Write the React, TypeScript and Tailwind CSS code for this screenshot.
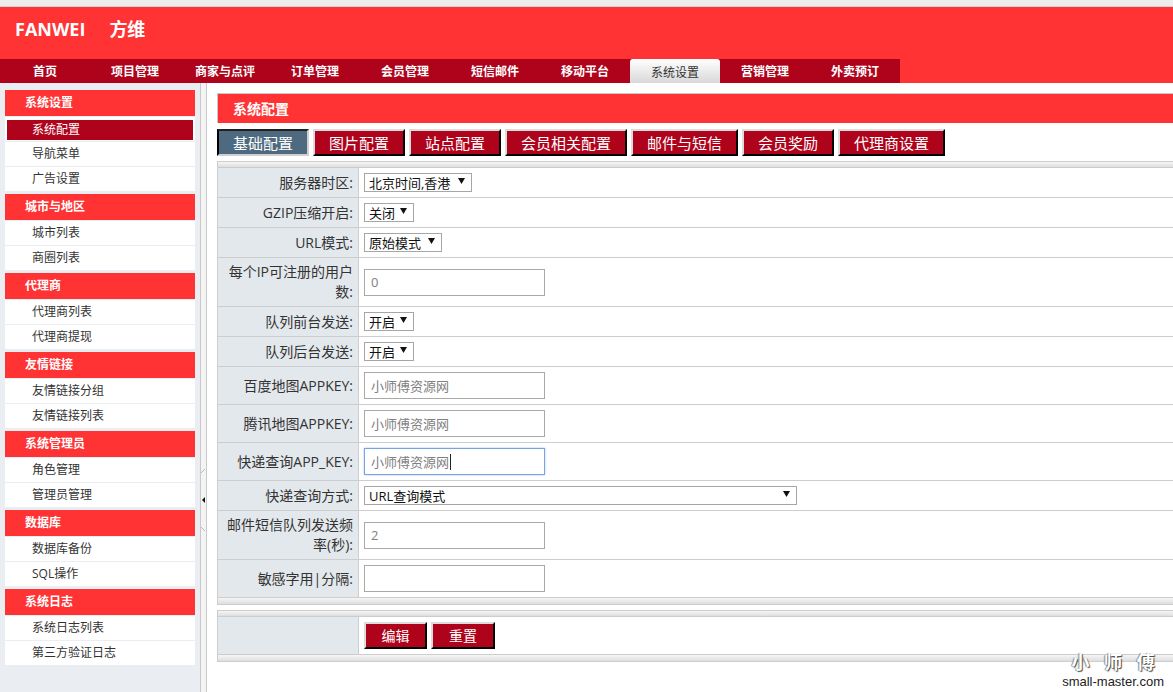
import React from "react";

const navItems = ["首页", "项目管理", "商家与点评", "订单管理", "会员管理", "短信邮件", "移动平台", "系统设置", "营销管理", "外卖预订"];

const groups = [
  { title: "系统设置", items: ["系统配置", "导航菜单", "广告设置"] },
  { title: "城市与地区", items: ["城市列表", "商圈列表"] },
  { title: "代理商", items: ["代理商列表", "代理商提现"] },
  { title: "友情链接", items: ["友情链接分组", "友情链接列表"] },
  { title: "系统管理员", items: ["角色管理", "管理员管理"] },
  { title: "数据库", items: ["数据库备份", "SQL操作"] },
  { title: "系统日志", items: ["系统日志列表", "第三方验证日志"] },
];

const tabs = ["基础配置", "图片配置", "站点配置", "会员相关配置", "邮件与短信", "会员奖励", "代理商设置"];

function Arrow() {
  return (
    <svg width="7" height="6" viewBox="0 0 7 6" className="shrink-0 mb-[4px]">
      <polygon points="0,0 7,0 3.5,6" fill="#111" />
    </svg>
  );
}

function Sel({ text, w }: { text: string; w: string }) {
  return (
    <div className={`h-[19px] border border-[#a6a6a6] bg-white flex items-center justify-between pl-[4px] pr-[6px] text-[13px] text-[#111] ${w}`}>
      <span className="leading-[17px] pt-[2px]">{text}</span>
      <Arrow />
    </div>
  );
}

function Inp({ value, focused }: { value: string; focused?: boolean }) {
  if (focused) {
    return (
      <div className="w-[181px] h-[27px] border border-[#78a3e4] shadow-[0_0_2px_#a9c6f0] bg-white flex items-center pl-[6px] text-[13px] text-[#808080]">
        <span className="leading-[18px]">{value}</span>
        <span className="w-px h-[16px] bg-[#222] ml-[1px]" />
      </div>
    );
  }
  return (
    <input
      readOnly
      defaultValue={value}
      className="w-[181px] h-[27px] border border-[#a9a9a9] bg-white px-[6px] text-[13px] text-[#808080] outline-none"
    />
  );
}

function Row({ label, h, children }: { label: React.ReactNode; h: string; children?: React.ReactNode }) {
  return (
    <div className={`flex border-b border-[#cdcdcd] ${h}`}>
      <div className="w-[141px] shrink-0 bg-[#e3e8ec] border-r border-[#cdcdcd] flex items-center justify-end pr-[5px] text-right text-[14px] leading-[20px] text-[#333]">
        <span>{label}</span>
      </div>
      <div className="flex-1 flex items-center pl-[5px]">{children}</div>
    </div>
  );
}

function Bar({ last }: { last?: boolean }) {
  return <div className={`h-[6px] bg-gradient-to-b from-[#f6f6f6] to-[#dedede] ${last ? "" : "border-b border-[#cdcdcd]"}`} />;
}

function RedBtn({ children, w }: { children: React.ReactNode; w: string }) {
  return (
    <button className={`h-[27px] ${w} flex items-center justify-center bg-[#af031c] text-white text-[14px] border-2 border-t-[#dcdcdc] border-l-[#dcdcdc] border-b-black border-r-black`}>
      {children}
    </button>
  );
}

export default function App() {
  return (
    <div className="relative w-[1173px] h-[692px] overflow-hidden flex flex-col bg-white font-['Open_Sans','Noto_Sans_CJK_SC',sans-serif]">
      {/* top strip */}
      <div className="h-[7px] shrink-0 bg-[#ececec] border-b border-[#d2d2d2]" />
      {/* header */}
      <div className="h-[76px] shrink-0 bg-[#ff3334] flex flex-col">
        <div className="h-[52px] flex items-start pt-[10px] pl-[15px] text-white font-bold text-[18px] leading-[24px]">
          <span>FANWEI</span>
          <span className="ml-[24px]">方维</span>
        </div>
        <div className="h-[24px] w-[900px] bg-[#af031c] flex">
          {navItems.map((n) =>
            n === "系统设置" ? (
              <div key={n} className="w-[90px] h-[24px] rounded-t-[3px] bg-gradient-to-b from-white to-[#d8d8d8] text-[#333] text-[12px] leading-[24px] pt-[2px] text-center">
                {n}
              </div>
            ) : (
              <div key={n} className="w-[90px] h-[24px] text-white font-bold text-[12px] leading-[24px] pt-[1px] text-center">
                {n}
              </div>
            )
          )}
        </div>
      </div>
      {/* body */}
      <div className="flex flex-1 min-h-0">
        {/* sidebar */}
        <div className="w-[200px] shrink-0 bg-[#eaeef3] pt-[7px] px-[5px]">
          {groups.map((g) => (
            <div key={g.title} className="mb-[3px]">
              <div className="h-[26px] bg-[#ff3334] text-white font-bold text-[12px] flex items-center pl-[20px] mb-[1px]">
                {g.title}
              </div>
              {g.items.map((it) =>
                it === "系统配置" ? (
                  <div key={it} className="h-[24px] bg-white mb-[1px] px-[2px] pt-[3px] pb-[1px]">
                    <div className="h-full bg-[#af031c] text-white text-[12px] flex items-center pl-[25px]">{it}</div>
                  </div>
                ) : (
                  <div key={it} className="h-[24px] bg-white mb-[1px] flex items-center pl-[27px] text-[12px] text-[#333]">
                    {it}
                  </div>
                )
              )}
            </div>
          ))}
        </div>
        {/* splitter */}
        <div className="w-[7px] shrink-0 border-l border-r border-[#c9c9c9] bg-[#f4f4f4] flex flex-col">
          <svg width="5" height="62" viewBox="0 0 5 62" className="mt-[386px]">
            <line x1="0" y1="4" x2="4" y2="0" stroke="#b8b8b8" strokeWidth="1" />
            <line x1="0" y1="58" x2="4" y2="62" stroke="#b8b8b8" strokeWidth="1" />
            <polygon points="1,31 4,28 4,34" fill="#111" />
          </svg>
        </div>
        {/* content */}
        <div className="flex-1 pl-[10px] pt-[10px] flex flex-col">
          <div className="h-[30px] bg-[#ff3334] border-t border-l border-[#c8c8c8] flex items-center pl-[15px] text-white font-bold text-[14px]">
            系统配置
          </div>
          <div className="flex gap-[4px] mt-[6px]">
            {tabs.map((t, i) =>
              i === 0 ? (
                <button key={t} className="h-[27px] px-[14px] bg-[#4e6a80] text-white text-[15px] leading-[20px] border-2 border-t-[#222] border-l-black border-b-[#d0d0d0] border-r-[#d0d0d0]">
                  {t}
                </button>
              ) : (
                <button key={t} className="h-[27px] px-[14px] bg-[#af031c] text-white text-[15px] leading-[20px] border-2 border-t-[#dcdcdc] border-l-[#dcdcdc] border-b-black border-r-black">
                  {t}
                </button>
              )
            )}
          </div>
          {/* form table */}
          <div className="mt-[5px] border-t border-l border-b border-[#cdcdcd]">
            <Bar />
            <Row label="服务器时区:" h="h-[30px]">
              <Sel text="北京时间,香港" w="w-[108px]" />
            </Row>
            <Row label="GZIP压缩开启:" h="h-[30px]">
              <Sel text="关闭" w="w-[50px]" />
            </Row>
            <Row label="URL模式:" h="h-[30px]">
              <Sel text="原始模式" w="w-[78px]" />
            </Row>
            <Row label={<>每个IP可注册的用户<br />数:</>} h="h-[49px]">
              <Inp value="0" />
            </Row>
            <Row label="队列前台发送:" h="h-[30px]">
              <Sel text="开启" w="w-[50px]" />
            </Row>
            <Row label="队列后台发送:" h="h-[30px]">
              <Sel text="开启" w="w-[50px]" />
            </Row>
            <Row label="百度地图APPKEY:" h="h-[38px]">
              <Inp value="小师傅资源网" />
            </Row>
            <Row label="腾讯地图APPKEY:" h="h-[38px]">
              <Inp value="小师傅资源网" />
            </Row>
            <Row label="快递查询APP_KEY:" h="h-[38px]">
              <Inp value="小师傅资源网" focused />
            </Row>
            <Row label="快递查询方式:" h="h-[30px]">
              <Sel text="URL查询模式" w="w-[433px]" />
            </Row>
            <Row label={<>邮件短信队列发送频<br />率(秒):</>} h="h-[49px]">
              <Inp value="2" />
            </Row>
            <Row label="敏感字用|分隔:" h="h-[38px]">
              <Inp value="" />
            </Row>
            <Bar last />
          </div>
          {/* action table */}
          <div className="mt-[5px] border-t border-l border-b border-[#cdcdcd]">
            <Bar />
            <Row label="" h="h-[38px]">
              <div className="flex gap-[4px]">
                <RedBtn w="w-[63px]">编辑</RedBtn>
                <RedBtn w="w-[64px]">重置</RedBtn>
              </div>
            </Row>
            <Bar last />
          </div>
        </div>
      </div>
      {/* watermark */}
      <div className="absolute right-[9px] bottom-[2px] flex flex-col items-center">
        <div className="text-[18px] leading-[22px] font-bold text-white tracking-[5px] pl-[5px] [text-shadow:1px_1px_1px_#444,-1px_0_1px_#888]">
          小 师 傅
        </div>
        <div className="text-[13px] leading-[17px] text-[#222] font-['Liberation_Sans',sans-serif]">small-master.com</div>
      </div>
    </div>
  );
}
